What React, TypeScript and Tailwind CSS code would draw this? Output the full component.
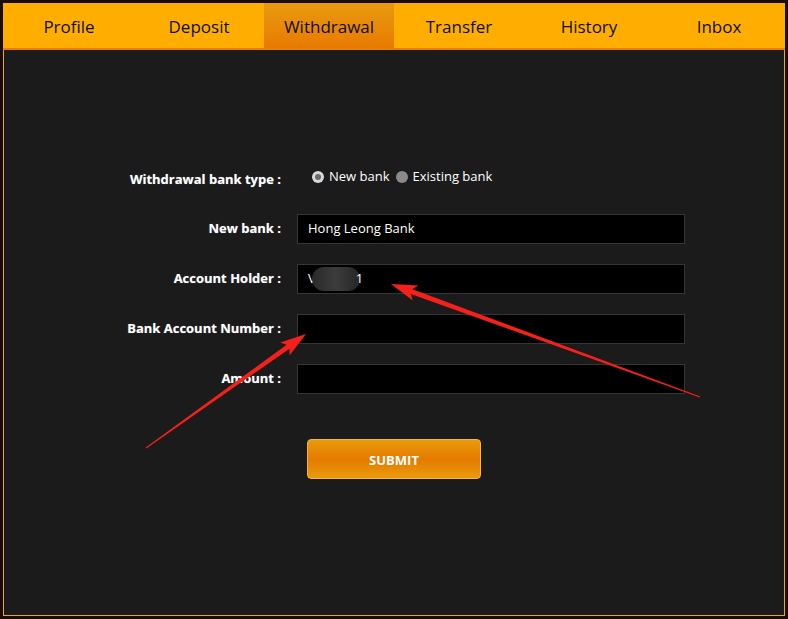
import React from 'react';

const tabs = ['Profile', 'Deposit', 'Withdrawal', 'Transfer', 'History', 'Inbox'];

// red annotation arrow, tapered shaft + head
function arrowPoints(x1: number, y1: number, x2: number, y2: number) {
  const dx = x2 - x1;
  const dy = y2 - y1;
  const len = Math.hypot(dx, dy);
  const ux = dx / len;
  const uy = dy / len;
  const nx = -uy;
  const ny = ux;
  const headLen = 26;
  const headW = 8;
  const notch = 4;
  const bx = x2 - ux * headLen;
  const by = y2 - uy * headLen;
  const sx = bx + ux * notch;
  const sy = by + uy * notch;
  const pts = [
    [x2, y2],
    [bx + nx * headW, by + ny * headW],
    [sx + nx * 2.5, sy + ny * 2.5],
    [x1 + nx * 0.6, y1 + ny * 0.6],
    [x1 - nx * 0.6, y1 - ny * 0.6],
    [sx - nx * 2.5, sy - ny * 2.5],
    [bx - nx * headW, by - ny * headW],
  ];
  return pts.map((p) => p.map((v) => v.toFixed(1)).join(',')).join(' ');
}

function Row({ label, children }: { label: string; children?: React.ReactNode }) {
  return (
    <div className="flex items-center h-[30px]">
      <div className="w-[165px] text-right text-[13px] font-bold text-white [text-shadow:0_0_1px_rgba(255,255,255,0.4)]">
        {label}
      </div>
      <div className="ml-[16px] w-[388px] h-[30px] bg-black border border-[#353535] flex items-center px-[10px] text-[13px] text-white">
        {children}
      </div>
    </div>
  );
}

export default function App() {
  return (
    <div
      className="relative w-[788px] h-[619px] bg-[#170d06] pt-[3px] px-[3px] pb-[3px] flex flex-col overflow-hidden"
      style={{ fontFamily: '"Open Sans", "DejaVu Sans", sans-serif' }}
    >
      {/* Tabs */}
      <div className="flex h-[45px] bg-[#ffae00] pl-[1px]">
        {tabs.map((t) => (
          <div
            key={t}
            className={`w-[130px] flex items-center justify-center pt-[2px] text-[17px] text-[#0e0e0e] ${
              t === 'Withdrawal' ? 'bg-gradient-to-b from-[#e89a10] to-[#e87a00]' : ''
            }`}
          >
            {t}
          </div>
        ))}
      </div>
      <div className="h-[2px] bg-[#e87e04]" />

      {/* Content panel */}
      <div className="flex-1 bg-[#1b1b1b] border-x border-b border-[#f5a800] pt-[114px] pl-[112px]">
        <div className="flex items-start h-[22px]">
          <div className="w-[165px] text-right text-[13px] font-bold text-white pt-[6px] [text-shadow:0_0_1px_rgba(255,255,255,0.4)]">
            Withdrawal bank type :
          </div>
          <div className="ml-[31px] flex items-center text-[13px] text-white gap-[5px] pt-[3px]">
            <span className="w-[12px] h-[12px] rounded-full bg-[#d8d8d8] flex items-center justify-center">
              <span className="w-[6px] h-[6px] rounded-full bg-[#6a6a6a]" />
            </span>
            <span>New bank</span>
            <span className="w-[12px] h-[12px] rounded-full bg-[#8a8a8a] ml-[1px]" />
            <span>Existing bank</span>
          </div>
        </div>

        <div className="flex flex-col gap-[20px] mt-[28px]">
          <Row label="New bank :">Hong Leong Bank</Row>
          <Row label="Account Holder :">
            <span>V</span>
            <span className="w-[48px] h-[24px] rounded-full bg-gradient-to-r from-[#2a2a2a] via-[#3c3c3c] to-[#262626] mx-[-4px]" />
            <span>1</span>
          </Row>
          <Row label="Bank Account Number :" />
          <Row label="Amount :" />
        </div>

        <button className="mt-[45px] ml-[191px] w-[174px] h-[40px] pt-[3px] rounded-[4px] border border-[#f2b640] bg-gradient-to-b from-[#e99a0c] via-[#e57a00] to-[#e89a0c] text-white text-[13px] font-bold">
          SUBMIT
        </button>
      </div>

      {/* annotation arrows */}
      <svg className="absolute inset-0 pointer-events-none" width="788" height="619">
        <polygon points={arrowPoints(700, 397, 391, 284)} fill="#f5201a" />
        <polygon points={arrowPoints(146, 448, 306, 334)} fill="#f5201a" />
      </svg>
    </div>
  );
}
